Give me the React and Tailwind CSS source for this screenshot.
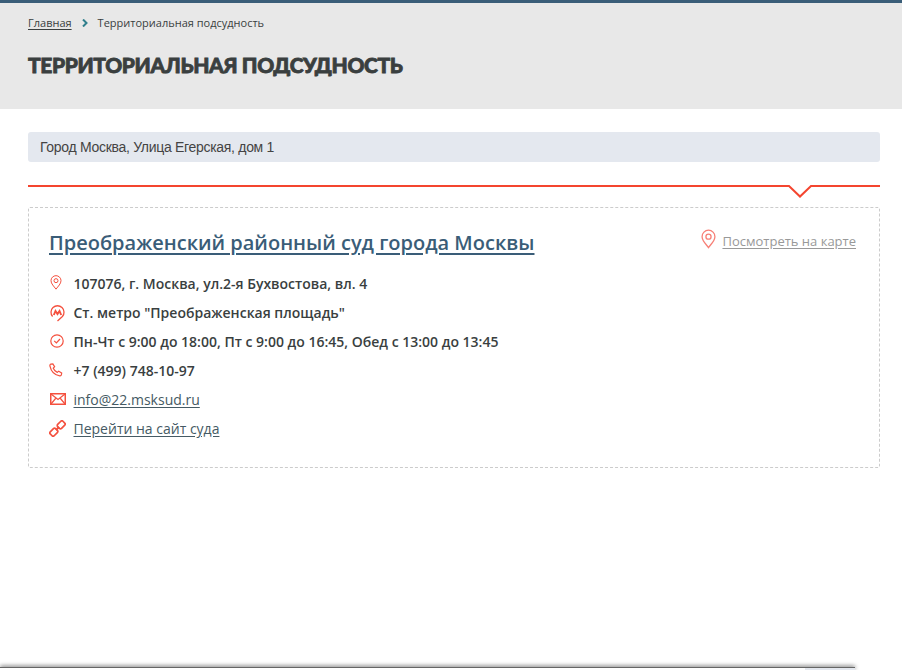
import React from 'react';

const PinIcon = ({ className }) => (
  <svg viewBox="0 0 14 18" fill="none" stroke="currentColor" strokeWidth="1.200" className={className}>
    <path d="M7 17C4.500 13.600 1 10.500 1 6.800a6 6 0 0 1 12 0C13 10.500 9.500 13.600 7 17Z" />
    <circle cx="7" cy="6.800" r="2.400" />
  </svg>
);

const MetroIcon = () => (
  <svg viewBox="0 0 15 17" fill="none" stroke="currentColor" strokeWidth="1.300" className="mt-[2px] h-[17px] w-[15px]">
    <path d="M2.600 11.500A6.500 6.500 0 1 1 12.400 11.500L7.500 16" />
    <path d="M3.800 10 5.500 6l2 3 2-3 1.700 4" strokeWidth="1.900" />
  </svg>
);

const ClockIcon = () => (
  <svg viewBox="0 0 14 14" fill="none" stroke="currentColor" strokeWidth="1.200" className="mt-[2px] h-[14px] w-[14px]">
    <circle cx="7" cy="7" r="6.200" />
    <path d="M4.200 6.800 6.400 9 10 5" />
  </svg>
);

const PhoneIcon = () => (
  <svg viewBox="0 0 16 16" fill="none" stroke="currentColor" strokeWidth="1.400" className="-ml-[1px] mt-[2px] h-[14px] w-[14px]">
    <path d="M2 1.200 4.400 1l2 3.300-1.500 1.600c.8 2 2.400 3.700 4.600 4.800l1.600-1.400 3.400 2.100-.4 2.200c-.2.8-1 1.100-1.800 1C6.600 13.800 2.400 9.500 1 3.200c-.1-.9.300-1.700 1-2Z" />
  </svg>
);

const MailIcon = () => (
  <svg viewBox="0 0 16 12" fill="none" stroke="currentColor" strokeWidth="1.500" className="mt-[3px] h-[12px] w-[16px]">
    <rect x="0.750" y="0.750" width="14.500" height="10.500" />
    <path d="M1 1l7 5.500L15 1M1 11l5-6M15 11l-5-6" strokeWidth="1.200" />
  </svg>
);

const LinkIcon = () => (
  <svg viewBox="0 0 17 17" fill="none" stroke="currentColor" strokeWidth="1.700" className="-ml-[1px] mt-[1px] h-[17px] w-[17px]">
    <rect x="1.050" y="9.450" width="7.500" height="5.500" rx="1.500" transform="rotate(-45 4.800 12.200)" />
    <rect x="8.450" y="2.050" width="7.500" height="5.500" rx="1.500" transform="rotate(-45 12.200 4.800)" />
    <path d="M7 10l3-3" strokeWidth="2" />
  </svg>
);

const rows = [
  { icon: <PinIcon className="mt-[1px] h-[15px] w-[12px]" />, text: '107076, г. Москва, ул.2-я Бухвостова, вл. 4' },
  { icon: <MetroIcon />, text: 'Ст. метро "Преображенская площадь"' },
  { icon: <ClockIcon />, text: 'Пн-Чт с 9:00 до 18:00, Пт с 9:00 до 16:45, Обед с 13:00 до 13:45' },
  { icon: <PhoneIcon />, text: '+7 (499) 748-10-97' },
  { icon: <MailIcon />, text: 'info@22.msksud.ru', link: true },
  { icon: <LinkIcon />, text: 'Перейти на сайт суда', link: true },
];

export default function App() {
  return (
    <div className="relative h-[670px] overflow-hidden bg-white font-['Open_Sans',sans-serif] text-[#3a3f3f]">
      {/* шапка */}
      <div className="h-[109px] border-t-[3px] border-[#3a5d78] bg-[#e8e8e8] px-[28px]">
        <div className="flex items-center pt-[12px] text-[11px] leading-[15px]">
          <a className="underline underline-offset-2">Главная</a>
          <svg viewBox="0 0 6 8" className="mx-[10px] h-[8px] w-[6px] fill-none stroke-[#2f7f8c] stroke-[2]">
            <path d="M1 .5 4.500 4 1 7.500" />
          </svg>
          <span>Территориальная подсудность</span>
        </div>
        <h1 className="mt-[21px] font-['Lato',sans-serif] text-[21px] font-black uppercase leading-[28px] tracking-[-0.4px] [-webkit-text-stroke:0.8px_#3a3f3f]">
          Территориальная подсудность
        </h1>
      </div>

      <div className="pl-[28px] pr-[22px] pt-[23px]">
        <div className="h-[30px] rounded-[3px] bg-[#e4e8ef] px-[12px] font-['Liberation_Sans',sans-serif] text-[14px] leading-[30px] tracking-[-0.3px] text-[#444]">
          Город Москва, Улица Егерская, дом 1
        </div>

        {/* красная линия с уголком */}
        <div className="relative mt-[23px] h-[2px] bg-[#f4452f]">
          <svg viewBox="0 0 24 14" className="absolute left-[759.5px] top-[-1px] h-[14px] w-[24px] fill-white stroke-[#f4452f] stroke-[2]">
            <path d="M1 0h22v4H1z" className="stroke-none" />
            <path d="M0 2h1l11 10.500L23 2h1" />
          </svg>
        </div>

        <div className="mt-[20px] h-[261px] rounded-[2px] border border-dashed border-[#ccc] px-[20px] pt-[21px]">
          <div className="flex items-start justify-between">
            <a className="text-[20px] font-semibold leading-[28px] text-[#3a5d78] underline underline-offset-[3px]">
              Преображенский районный суд города Москвы
            </a>
            <div className="mr-[3px] flex items-start gap-[6px] text-[#999]">
              <PinIcon className="h-[20px] w-[15px] text-[#f77f76]" />
              <a className="mt-[3px] text-[13px] leading-[18px] underline underline-offset-2">Посмотреть на карте</a>
            </div>
          </div>

          <div className="mt-[17px] flex flex-col gap-[9px]">
            {rows.map((row) => (
              <div key={row.text} className="flex h-[20px] items-start text-[14px] leading-[20px]">
                <span className="flex w-[24.500px] shrink-0 justify-start pl-[1px] text-[#f4513f]">{row.icon}</span>
                {row.link ? (
                  <a className="text-[#455a64] underline underline-offset-2">{row.text}</a>
                ) : (
                  <span className="font-semibold">{row.text}</span>
                )}
              </div>
            ))}
          </div>
        </div>
      </div>

      {/* край окна снизу */}
      <div className="absolute bottom-0 left-0 h-[3px] w-[855px] border-t border-[#666] bg-white shadow-[0_-1px_4px_rgba(0,0,0,0.6)]">
        <div className="absolute right-0 top-0 h-[2px] w-[50px] bg-[#e4e8ef]" />
      </div>
    </div>
  );
}
